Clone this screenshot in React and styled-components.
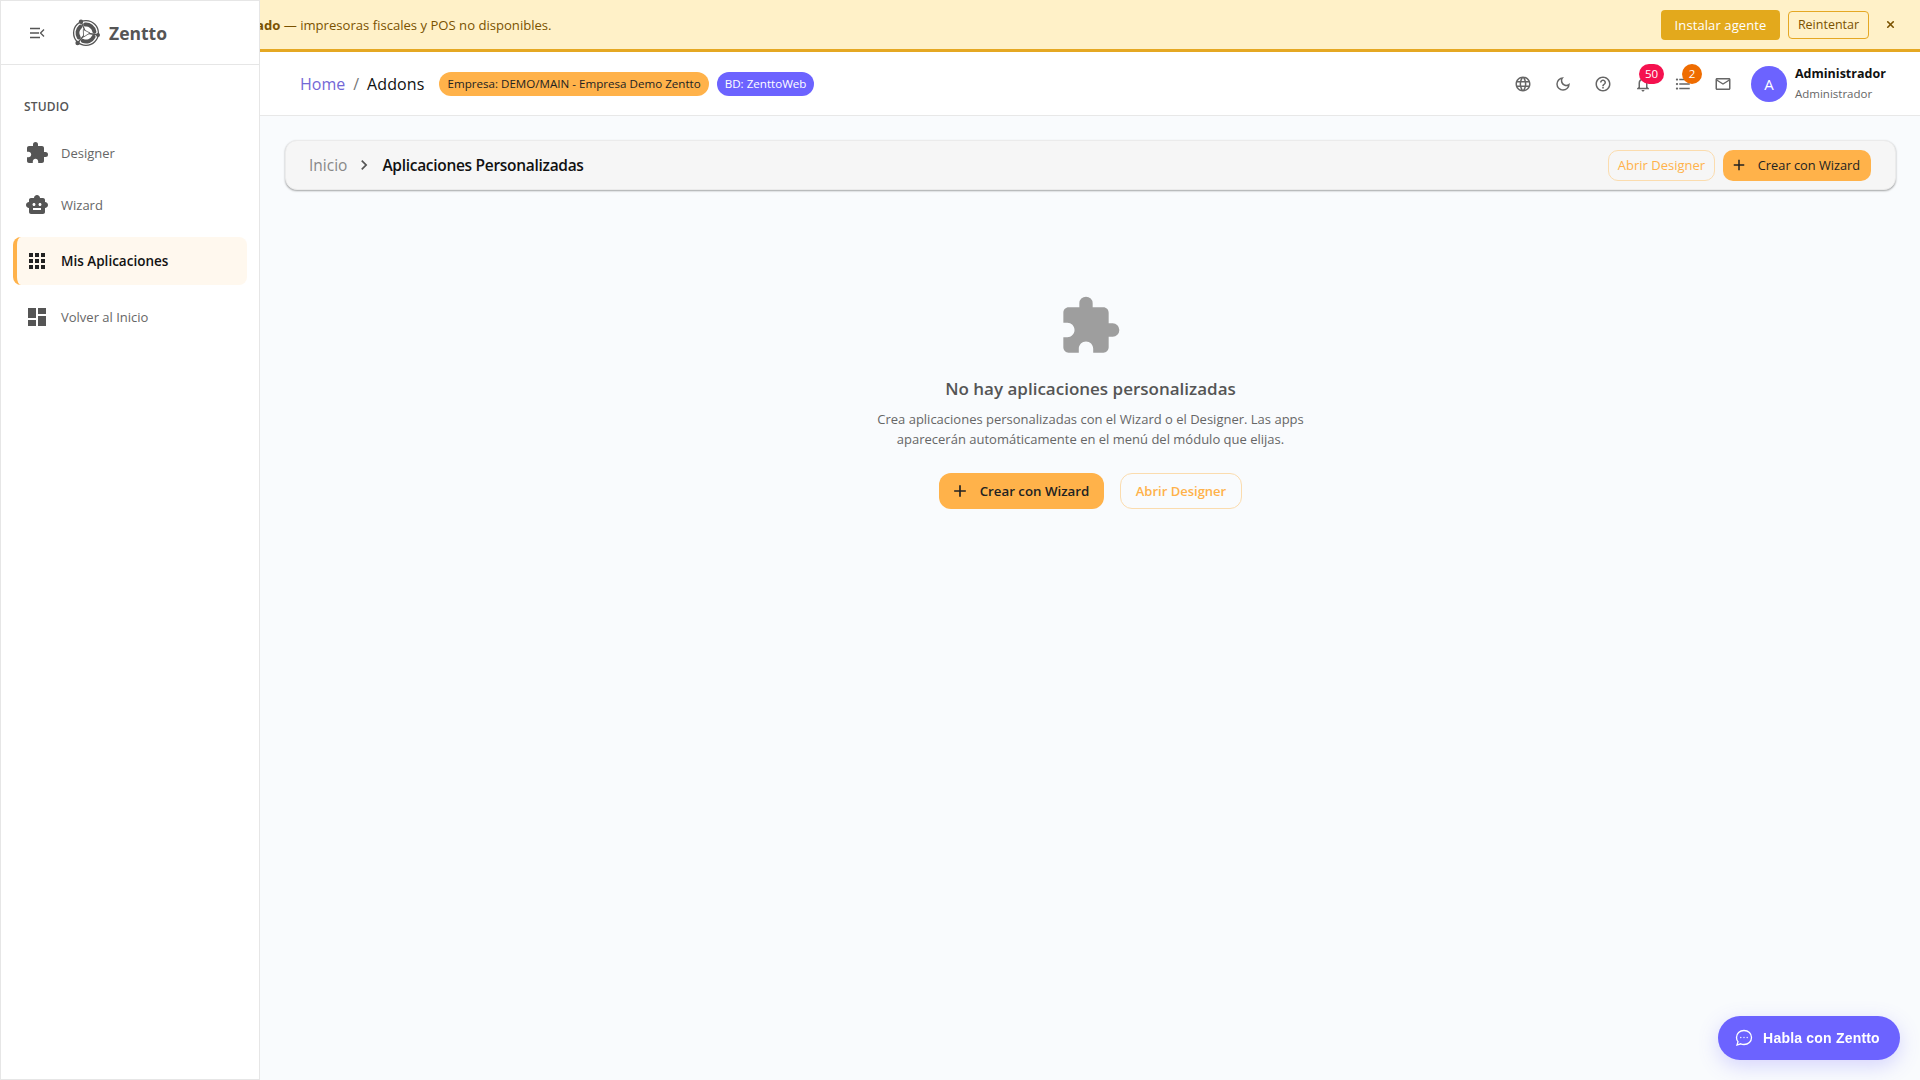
import React from 'react';
import styled, { createGlobalStyle } from 'styled-components';
import { X } from 'lucide-react';
import {
  MdExtension,
  MdSmartToy,
  MdApps,
  MdDashboard,
  MdLanguage,
  MdOutlineDarkMode,
  MdHelpOutline,
  MdNotificationsNone,
  MdFormatListBulleted,
  MdOutlineMailOutline,
  MdAdd,
  MdChevronRight,
} from 'react-icons/md';

const colors = {
  orange: '#ffb24a',
  orangeLine: '#fbdcae',
  violet: '#6c63ff',
  ink: '#111111',
  grey: '#5f6368',
  warnBg: '#fff1c8',
  warnLine: '#e5a823',
  warnText: '#7a5200',
};

const GlobalStyle = createGlobalStyle`
  html, body {
    margin: 0;
    padding: 0;
    height: 100%;
  }
  body {
    background: #f9fbfd;
    font-family: "Open Sans", "Noto Sans", sans-serif;
    color: ${colors.ink};
  }
  button {
    font-family: inherit;
  }
`;

const Page = styled.div`
  min-height: 1080px;
  display: flex;
  flex-direction: column;
  overflow: hidden;
`;

const Banner = styled.div`
  height: 49px;
  flex: none;
  background: ${colors.warnBg};
  border-bottom: 3px solid ${colors.warnLine};
  display: flex;
  align-items: center;
  justify-content: space-between;
  padding: 0 22px 0 194px;
  color: ${colors.warnText};
  font-size: 13.1px;
  white-space: nowrap;
`;

const BannerActions = styled.div`
  display: flex;
  align-items: center;
`;

const InstallBtn = styled.button`
  height: 30px;
  width: 119px;
  border: 0;
  border-radius: 4px;
  background: #e3a91c;
  color: #fff;
  font-size: 13px;
  letter-spacing: 0.1px;
  padding: 0;
`;

const RetryBtn = styled.button`
  height: 28px;
  width: 81px;
  margin-left: 8px;
  border: 1px solid ${colors.warnLine};
  border-radius: 4px;
  background: transparent;
  color: ${colors.warnText};
  font-size: 12.5px;
  padding: 0;
`;

const CloseBtn = styled.button`
  width: 16px;
  height: 16px;
  margin-left: 13px;
  border: 0;
  background: none;
  color: ${colors.warnText};
  padding: 0;
  display: flex;
  align-items: center;
  justify-content: center;
`;

const Sidebar = styled.aside`
  position: fixed;
  left: 0;
  top: 0;
  width: 260px;
  height: 1080px;
  box-sizing: border-box;
  background: #fff;
  border: 1px solid #e6e6e6;
  z-index: 5;
`;

const SideHead = styled.div`
  height: 64px;
  box-sizing: border-box;
  border-bottom: 1px solid #e6e6e6;
  display: flex;
  align-items: center;
  padding-left: 29px;
`;

const LogoWrap = styled.div`
  display: flex;
  align-items: center;
  margin-left: 27px;
  gap: 9px;
`;

const LogoText = styled.span`
  font-size: 17.5px;
  font-weight: 700;
  color: #555;
`;

const SideLabel = styled.div`
  margin: 34px 0 0 23px;
  font-size: 12px;
  font-weight: 600;
  letter-spacing: 0.15px;
  line-height: 16px;
  color: #555;
`;

const SideNav = styled.nav`
  margin-top: 14px;
  padding: 0 12px;
  display: flex;
  flex-direction: column;
  gap: 4px;
`;

const SideItem = styled.a`
  display: flex;
  align-items: center;
  gap: 12px;
  height: 48px;
  margin: ${p => (p.$active ? '4px 0' : '0')};
  padding-left: ${p => (p.$active ? '8px' : '12px')};
  border-left: ${p => (p.$active ? `4px solid ${colors.orange}` : '0')};
  border-radius: 8px;
  background: ${p => (p.$active ? '#fff8ee' : 'transparent')};
  color: ${p => (p.$active ? colors.ink : '#666')};
  font-size: ${p => (p.$active ? '13.5px' : '13px')};
  font-weight: ${p => (p.$active ? 600 : 400)};
  svg {
    flex: none;
    color: ${p => (p.$active ? '#222' : '#555')};
  }
`;

const Main = styled.div`
  margin-left: 260px;
  flex: 1;
  display: flex;
  flex-direction: column;
`;

const TopBar = styled.header`
  height: 64px;
  flex: none;
  box-sizing: border-box;
  background: #fff;
  border-bottom: 1px solid #e8e8e8;
  display: flex;
  align-items: center;
  justify-content: space-between;
  padding: 0 28px 0 40px;
`;

const Crumbs = styled.div`
  display: flex;
  align-items: center;
  font-size: 16px;
`;

const HomeLink = styled.a`
  color: #7367d6;
`;

const Slash = styled.span`
  margin: 0 8px;
  color: #777;
`;

const CurrentCrumb = styled.span`
  font-weight: 500;
  letter-spacing: 0.1px;
`;

const Chip = styled.span`
  height: 24px;
  display: flex;
  align-items: center;
  padding: 0 8px;
  border-radius: 12px;
  font-size: 11.6px;
  margin-left: ${p => (p.$first ? '15px' : '8px')};
  background: ${p => p.$bg};
  color: ${p => p.$fg};
`;

const TopTools = styled.div`
  display: flex;
  align-items: center;
`;

const ToolIcon = styled.span`
  position: relative;
  width: 40px;
  height: 40px;
  display: flex;
  align-items: center;
  justify-content: center;
  color: #666;
`;

const Count = styled.span`
  position: absolute;
  top: 0;
  left: ${p => p.$left}px;
  min-width: 20px;
  height: 20px;
  padding: 0 ${p => (p.$wide ? '6px' : '0')};
  box-sizing: border-box;
  border-radius: 10px;
  background: ${p => p.$bg};
  color: #fff;
  font-size: 11.5px;
  display: flex;
  align-items: center;
  justify-content: center;
`;

const Avatar = styled.div`
  width: 36px;
  height: 36px;
  margin-left: 8px;
  border-radius: 50%;
  background: ${colors.violet};
  color: #fff;
  font-size: 15px;
  display: flex;
  align-items: center;
  justify-content: center;
`;

const UserInfo = styled.div`
  margin-left: 8px;
  display: flex;
  flex-direction: column;
  gap: 4px;
  min-width: 97px;
`;

const UserName = styled.span`
  font-size: 12.5px;
  font-weight: 700;
  line-height: 17px;
`;

const UserRole = styled.span`
  font-size: 11.5px;
  line-height: 16px;
  color: #666;
`;

const Content = styled.main`
  padding: 24px 24px 0 25px;
  display: flex;
  flex-direction: column;
`;

const TitleCard = styled.div`
  height: 50px;
  box-sizing: border-box;
  background: #f6f6f6;
  border: 1px solid #ebebeb;
  border-radius: 12px;
  box-shadow: 0 1px 2px rgba(0, 0, 0, 0.35);
  display: flex;
  align-items: center;
  justify-content: space-between;
  padding: 0 24px 0 23px;
`;

const TitleTrail = styled.div`
  display: flex;
  align-items: center;
  font-size: 15.5px;
`;

const TrailRoot = styled.span`
  color: #888;
`;

const TrailChevron = styled.span`
  display: flex;
  margin: 0 8px 0 7px;
  color: #555;
`;

const TrailTitle = styled.span`
  font-weight: 600;
  letter-spacing: -0.3px;
`;

const TitleActions = styled.div`
  display: flex;
  align-items: center;
  gap: 8px;
`;

const Btn = styled.button`
  display: flex;
  align-items: center;
  justify-content: center;
  box-sizing: border-box;
  height: ${p => (p.$large ? '36px' : '31px')};
  padding: 0 ${p => (p.$primary ? '4px' : '0')} 0 0;
  width: ${p => p.$width}px;
  gap: 10px;
  border-radius: ${p => (p.$large ? '12px' : '10px')};
  border: ${p => (p.$primary ? '0' : `1px solid ${colors.orangeLine}`)};
  background: ${p => (p.$primary ? colors.orange : 'transparent')};
  color: ${p => (p.$primary ? '#222' : colors.orange)};
  font-size: ${p => p.$size}px;
  font-weight: ${p => (p.$large ? 600 : 400)};
`;

const Empty = styled.section`
  margin-top: 104px;
  display: flex;
  flex-direction: column;
  align-items: center;
  text-align: center;
`;

const EmptyIcon = styled.div`
  display: flex;
  color: #9e9e9e;
  margin-left: -2px;
`;

const EmptyTitle = styled.h2`
  margin: 18px 0 0;
  font-size: 17px;
  font-weight: 600;
  line-height: 26px;
  color: #555;
`;

const EmptyText = styled.p`
  margin: 7px 0 0;
  width: 440px;
  font-size: 13px;
  line-height: 20px;
  color: #666;
`;

const EmptyActions = styled.div`
  margin-top: 24px;
  display: flex;
  gap: 16px;
`;

const ChatBtn = styled.button`
  position: fixed;
  left: 1718px;
  top: 1016px;
  width: 182px;
  height: 44px;
  border: 0;
  border-radius: 22px;
  background: ${colors.violet};
  box-shadow: 0 6px 20px rgba(108, 99, 255, 0.25);
  color: #fff;
  font-family: "Liberation Sans", Arial, sans-serif;
  font-size: 14px;
  font-weight: 700;
  letter-spacing: 0.2px;
  display: flex;
  align-items: center;
  justify-content: center;
  gap: 10px;
  padding: 0 3px 0 0;
`;

const MenuCloseIcon = () => (
  <svg width="15" height="12" viewBox="0 0 15 12" fill="none" stroke="#555" strokeWidth="1.3">
    <path d="M0 1.5h10M0 6h9M0 10.5h10M14 2.5 10.5 6l3.5 3.5" />
  </svg>
);

const ZenttoLogo = () => (
  <svg width="28" height="28" viewBox="0 0 28 28">
    <circle cx="14" cy="14" r="12.4" fill="none" stroke="#555" strokeWidth="1.3" />
    <g fill="none" stroke="#555" strokeWidth="4" strokeLinecap="round">
      <path d="M13.1 5.55A8.5 8.5 0 0 1 22.4 12.8" />
      <path d="M21.6 17.9A8.5 8.5 0 0 1 10.8 21.9" />
      <path d="M6.8 18.5A8.5 8.5 0 0 1 8.3 7.7" />
    </g>
    <path d="M14 14 9 2.7M14 14l12.300 2M14 14 5.600 24" stroke="#555" strokeWidth="1.3" />
    <path d="M11.300 10.500 18 14l-6.400 4z" fill="#fff" stroke="#555" strokeWidth=".8" />
    <circle cx="9" cy="2.700" r="2.200" fill="#555" />
    <circle cx="26" cy="16" r="2" fill="#555" />
    <circle cx="5.600" cy="24" r="2.200" fill="#555" />
  </svg>
);

const ChatIcon = () => (
  <svg width="18" height="18" viewBox="0 0 18 18" fill="none" stroke="#fff" strokeWidth="1.3">
    <path d="M9 1.500c4.400 0 7.500 3 7.500 7s-3.100 7-7.500 7c-1.200 0-2.300-.2-3.300-.7L2 16l1-3.300C2 11.500 1.500 10 1.500 8.500c0-4 3.100-7 7.500-7z" />
    <circle cx="5.800" cy="8.500" r=".7" fill="#fff" stroke="none" />
    <circle cx="9" cy="8.500" r=".7" fill="#fff" stroke="none" />
    <circle cx="12.200" cy="8.500" r=".7" fill="#fff" stroke="none" />
  </svg>
);

const navItems = [
  { label: 'Designer', Icon: MdExtension },
  { label: 'Wizard', Icon: MdSmartToy },
  { label: 'Mis Aplicaciones', Icon: MdApps, active: true },
  { label: 'Volver al Inicio', Icon: MdDashboard },
];

const App = () => {
  return (
    <Page>
      <GlobalStyle />
      <Sidebar>
        <SideHead>
          <MenuCloseIcon />
          <LogoWrap>
            <ZenttoLogo />
            <LogoText>Zentto</LogoText>
          </LogoWrap>
        </SideHead>
        <SideLabel>STUDIO</SideLabel>
        <SideNav>
          {navItems.map(({ label, Icon, active }) => (
            <SideItem key={label} $active={active}>
              <Icon size={24} />
              {label}
            </SideItem>
          ))}
        </SideNav>
      </Sidebar>

      <Banner>
        <span>
          <b>no detectado</b> — impresoras fiscales y POS no disponibles.
        </span>
        <BannerActions>
          <InstallBtn>Instalar agente</InstallBtn>
          <RetryBtn>Reintentar</RetryBtn>
          <CloseBtn>
            <X size={11} strokeWidth={3.5} />
          </CloseBtn>
        </BannerActions>
      </Banner>

      <Main>
        <TopBar>
          <Crumbs>
            <HomeLink>Home</HomeLink>
            <Slash>/</Slash>
            <CurrentCrumb>Addons</CurrentCrumb>
            <Chip $first $bg={colors.orange} $fg="#222">
              Empresa: DEMO/MAIN - Empresa Demo Zentto
            </Chip>
            <Chip $bg={colors.violet} $fg="#fff">
              BD: ZenttoWeb
            </Chip>
          </Crumbs>
          <TopTools>
            <ToolIcon>
              <MdLanguage size={18} />
            </ToolIcon>
            <ToolIcon>
              <MdOutlineDarkMode size={18} />
            </ToolIcon>
            <ToolIcon>
              <MdHelpOutline size={18} />
            </ToolIcon>
            <ToolIcon>
              <MdNotificationsNone size={18} />
              <Count $bg="#f5114f" $left={16} $wide>50</Count>
            </ToolIcon>
            <ToolIcon>
              <MdFormatListBulleted size={18} />
              <Count $bg="#ef6c00" $left={19}>2</Count>
            </ToolIcon>
            <ToolIcon>
              <MdOutlineMailOutline size={18} />
            </ToolIcon>
            <Avatar>A</Avatar>
            <UserInfo>
              <UserName>Administrador</UserName>
              <UserRole>Administrador</UserRole>
            </UserInfo>
          </TopTools>
        </TopBar>

        <Content>
          <TitleCard>
            <TitleTrail>
              <TrailRoot>Inicio</TrailRoot>
              <TrailChevron>
                <MdChevronRight size={20} />
              </TrailChevron>
              <TrailTitle>Aplicaciones Personalizadas</TrailTitle>
            </TitleTrail>
            <TitleActions>
              <Btn $width={107} $size={13}>Abrir Designer</Btn>
              <Btn $primary $width={148} $size={12.8}>
                <MdAdd size={18} />
                Crear con Wizard
              </Btn>
            </TitleActions>
          </TitleCard>

          <Empty>
            <EmptyIcon>
              <MdExtension size={64} />
            </EmptyIcon>
            <EmptyTitle>No hay aplicaciones personalizadas</EmptyTitle>
            <EmptyText>
              Crea aplicaciones personalizadas con el Wizard o el Designer. Las apps aparecerán
              automáticamente en el menú del módulo que elijas.
            </EmptyText>
            <EmptyActions>
              <Btn $large $primary $width={165} $size={13.3}>
                <MdAdd size={20} />
                Crear con Wizard
              </Btn>
              <Btn $large $width={122} $size={13}>Abrir Designer</Btn>
            </EmptyActions>
          </Empty>
        </Content>
      </Main>

      <ChatBtn>
        <ChatIcon />
        Habla con Zentto
      </ChatBtn>
    </Page>
  );
};

export default App;
